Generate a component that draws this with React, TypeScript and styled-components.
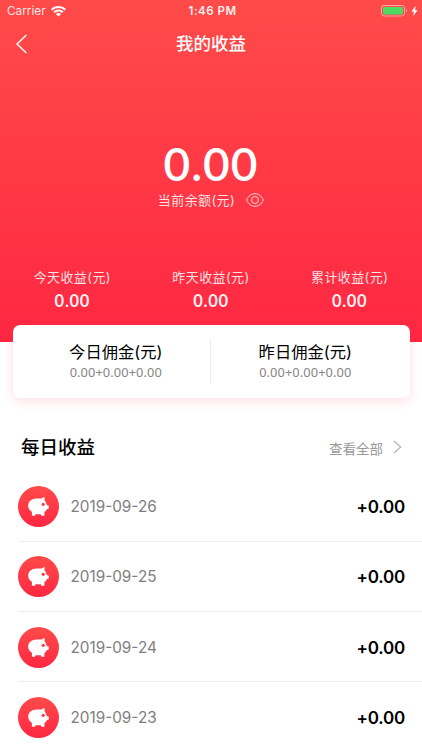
import React from "react";
import styled, { createGlobalStyle } from "styled-components";

const GlobalStyle = createGlobalStyle`
  * { box-sizing: border-box; }
  html, body { margin: 0; padding: 0; background: #fff; overflow: hidden; }
  body { font-family: Inter, "Noto Sans CJK SC", sans-serif; color: #000; }
`;

const Screen = styled.div`
  width: 422px;
  height: 750px;
  overflow: hidden;
  background: #fff;
`;

const Hero = styled.header`
  height: 342px;
  color: #fff;
  background: linear-gradient(180deg, #ff4b49 0%, #ff2742 100%);
`;

const StatusBar = styled.div`
  height: 22px;
  display: grid;
  grid-template-columns: 1fr auto 1fr;
  align-items: center;
  padding: 0 4px 0 7px;
  font-size: 12px;
  line-height: 22px;
`;

const Carrier = styled.div`
  display: flex;
  align-items: center;
  gap: 5px;
  font-size: 11.8px;
  color: rgba(255, 255, 255, 0.88);
`;

const Clock = styled.div`
  font-weight: 600;
  font-size: 11.5px;
  letter-spacing: 0.5px;
  color: rgba(255, 255, 255, 0.92);
`;

const Power = styled.div`
  display: flex;
  justify-content: flex-end;
  align-items: center;
  gap: 3px;
`;

const NavBar = styled.nav`
  height: 44px;
  display: grid;
  grid-template-columns: 60px 1fr 60px;
  align-items: center;
  padding: 0 15px 1px;
`;

const BackButton = styled.button`
  display: flex;
  padding: 0;
  border: 0;
  background: none;
  color: inherit;
`;

const Title = styled.h1`
  margin: 0;
  text-align: center;
  font-size: 17.5px;
  line-height: 24px;
  font-weight: 500;
`;

const Balance = styled.section`
  display: flex;
  flex-direction: column;
  align-items: center;
  padding-top: 71px;
`;

const BalanceAmount = styled.div`
  font-family: Lato, sans-serif;
  font-size: 46px;
  line-height: 53px;
  font-weight: 600;
  letter-spacing: 1px;
`;

const BalanceLabel = styled.div`
  display: flex;
  align-items: center;
  gap: 11px;
  height: 20px;
  font-size: 13px;
  letter-spacing: 0.4px;
  line-height: 20px;
  color: rgba(255, 255, 255, 0.88);
`;

const Stats = styled.section`
  display: grid;
  grid-template-columns: repeat(3, 1fr);
  margin: 57px 3px 0;
  text-align: center;
`;

const StatLabel = styled.div`
  font-size: 13px;
  line-height: 20px;
  letter-spacing: 0.4px;
  color: rgba(255, 255, 255, 0.88);
`;

const StatValue = styled.div`
  margin-top: 4px;
  font-family: Lato, sans-serif;
  font-size: 16.5px;
  line-height: 20px;
  font-weight: 700;
  letter-spacing: 0.7px;
  color: rgba(255, 255, 255, 0.95);
`;

const Card = styled.section`
  position: relative;
  height: 73px;
  margin: -17px 12.5px 0;
  display: grid;
  grid-template-columns: 1fr 1px 1fr;
  align-items: center;
  padding: 0 10px 0 9px;
  border-radius: 7px;
  background: #fff;
  box-shadow: 0 3px 12px rgba(255, 39, 66, 0.16);
`;

const CardDivider = styled.div`
  height: 45px;
  background: #ececec;
`;

const Commission = styled.div`
  text-align: center;
  padding-bottom: 1px;
`;

const CommissionLabel = styled.div`
  font-size: 16.3px;
  line-height: 22px;
`;

const CommissionParts = styled.div`
  font-family: "Noto Sans", sans-serif;
  font-size: 12.8px;
  line-height: 18px;
  letter-spacing: 0.1px;
  color: #858585;
`;

const SectionHead = styled.div`
  display: flex;
  align-items: center;
  justify-content: space-between;
  height: 30px;
  margin: 34px 20px 0 21px;
`;

const SectionTitle = styled.h2`
  margin: 0;
  font-size: 18.5px;
  line-height: 28px;
  font-weight: 500;
`;

const MoreLink = styled.div`
  display: flex;
  align-items: center;
  gap: 10px;
  color: #999;
`;

const MoreText = styled.span`
  padding-top: 3px;
  font-size: 13.5px;
  line-height: 20px;
`;

const List = styled.ul`
  list-style: none;
  margin: 9.5px 0 0;
  padding: 0;
`;

const Row = styled.li`
  height: 70.2px;
  margin-left: 17.5px;
  padding: 1.4px 17px 0 0;
  display: flex;
  align-items: center;
  border-bottom: 1px solid #ededed;
`;

const Badge = styled.div`
  width: 41px;
  height: 41px;
  border-radius: 50%;
  display: flex;
  align-items: center;
  justify-content: center;
  background: linear-gradient(180deg, #ff4b49, #ff2742);
`;

const RowDate = styled.div`
  flex: 1;
  margin-left: 12px;
  padding-top: 1px;
  font-size: 15.3px;
  line-height: 20px;
  color: #7e7e7e;
`;

const RowAmount = styled.div`
  padding-top: 1px;
  font-size: 17px;
  line-height: 22px;
  font-weight: 600;
  letter-spacing: -0.2px;
`;

const WifiIcon = () => (
  <svg width="15" height="11" viewBox="0 0 15 11" fill="#fff">
    <path d="M7.5 0C4.6 0 2 1.1 0 2.9l1.4 1.5A9 9 0 0 1 7.5 2a9 9 0 0 1 6.1 2.4L15 2.9A11.2 11.2 0 0 0 7.5 0Z" />
    <path d="M7.5 3.5c-2 0-3.8.8-5.1 2l1.500 1.500A5.300 5.300 0 0 1 7.500 5.500c1.400 0 2.700.6 3.600 1.500l1.500-1.500a7.500 7.500 0 0 0-5.100-2Z" />
    <path d="M7.500 7c-1 0-1.900.4-2.600 1l2.600 2.600L10.100 8c-.7-.6-1.600-1-2.600-1Z" />
  </svg>
);

const BatteryIcon = () => (
  <svg width="27" height="12" viewBox="0 0 27 12" fill="none">
    <rect x=".5" y=".5" width="23" height="10.500" rx="2.500" stroke="#fff" strokeOpacity=".5" />
    <rect x="2" y="2" width="20" height="7.500" rx="1.200" fill="#4cd964" />
    <path d="M25 4c1.500.6 1.500 3 0 3.600Z" fill="#fff" fillOpacity=".5" />
  </svg>
);

const BoltIcon = () => (
  <svg width="7" height="10" viewBox="0 0 7 10" fill="#fff">
    <path d="M4.700 0 .3 5.500h2.600L2.100 10l4.600-5.800H4.100Z" />
  </svg>
);

const BackIcon = () => (
  <svg width="13" height="20" viewBox="0 0 13 20" fill="none" stroke="#fff" strokeWidth="1.400">
    <path d="M11.300.9 2 10.100l9.300 9" />
  </svg>
);

const EyeIcon = () => (
  <svg width="18" height="14" viewBox="0 0 18 14" fill="none" stroke="#fff" strokeOpacity=".78">
    <path d="M.6 7C2.300 3 5.400.7 9 .7S15.700 3 17.400 7C15.700 11 12.600 13.300 9 13.300S2.300 11 .6 7Z" />
    <circle cx="9" cy="7" r="3.500" />
  </svg>
);

const ChevronIcon = () => (
  <svg width="9" height="14" viewBox="0 0 9 14" fill="none" stroke="#b8b8b8" strokeWidth="1.300">
    <path d="m1 1 6.600 6L1 13" />
  </svg>
);

const PigIcon = () => (
  <svg width="21" height="19" viewBox="0 0 21 19">
    <path
      fill="#fff"
      d="M8.500 1.500h5c1-.3 1.700-.9 2.600-1.400l.5.2-.1 3c.9.9 1.400 1.900 1.700 3.100l.9 1.900 1.700.5v2.800l-1.800.4c-.7 1.300-1.400 2.300-2.600 3v3.700h-3.100l-.5-1.400H7.500L7 18.700H3.900v-3.900C1.500 13.300.2 11.300.2 8.800.2 4.500 3.800 1.500 8.500 1.500Z"
    />
    <circle cx="15.200" cy="7.300" r="1.600" fill="#ff3947" />
  </svg>
);

const stats = [
  { label: "今天收益(元)", value: "0.00" },
  { label: "昨天收益(元)", value: "0.00" },
  { label: "累计收益(元)", value: "0.00" },
];

const days = ["2019-09-26", "2019-09-25", "2019-09-24", "2019-09-23"];

export default function App() {
  return (
    <Screen>
      <GlobalStyle />
      <Hero>
        <StatusBar>
          <Carrier>
            Carrier
            <WifiIcon />
          </Carrier>
          <Clock>1:46 PM</Clock>
          <Power>
            <BatteryIcon />
            <BoltIcon />
          </Power>
        </StatusBar>
        <NavBar>
          <BackButton aria-label="返回">
            <BackIcon />
          </BackButton>
          <Title>我的收益</Title>
        </NavBar>
        <Balance>
          <BalanceAmount>0.00</BalanceAmount>
          <BalanceLabel>
            当前余额(元)
            <EyeIcon />
          </BalanceLabel>
        </Balance>
        <Stats>
          {stats.map((s) => (
            <div key={s.label}>
              <StatLabel>{s.label}</StatLabel>
              <StatValue>{s.value}</StatValue>
            </div>
          ))}
        </Stats>
      </Hero>
      <Card>
        <Commission>
          <CommissionLabel>今日佣金(元)</CommissionLabel>
          <CommissionParts>0.00+0.00+0.00</CommissionParts>
        </Commission>
        <CardDivider />
        <Commission>
          <CommissionLabel>昨日佣金(元)</CommissionLabel>
          <CommissionParts>0.00+0.00+0.00</CommissionParts>
        </Commission>
      </Card>
      <SectionHead>
        <SectionTitle>每日收益</SectionTitle>
        <MoreLink>
          <MoreText>查看全部</MoreText>
          <ChevronIcon />
        </MoreLink>
      </SectionHead>
      <List>
        {days.map((d) => (
          <Row key={d}>
            <Badge>
              <PigIcon />
            </Badge>
            <RowDate>{d}</RowDate>
            <RowAmount>+0.00</RowAmount>
          </Row>
        ))}
      </List>
    </Screen>
  );
}
